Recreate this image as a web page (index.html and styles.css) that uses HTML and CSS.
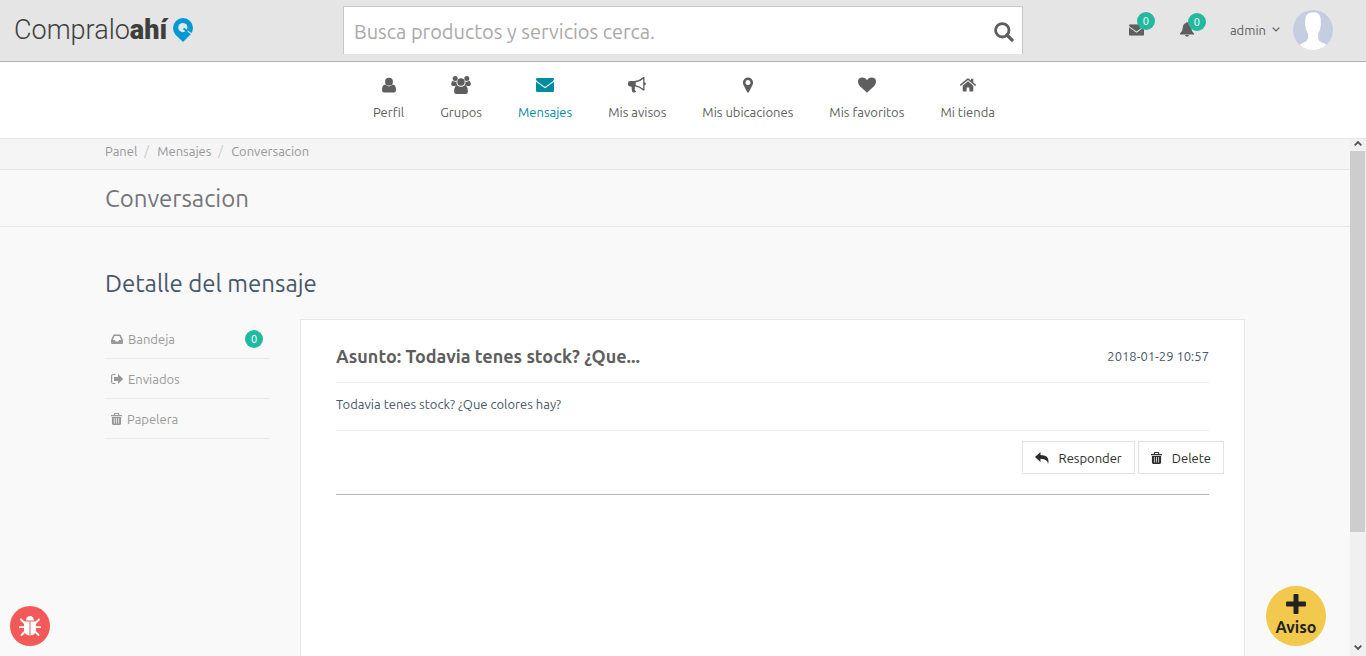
FILE: index.html
```html
<!DOCTYPE html>
<html lang="es">
<head>
<meta charset="utf-8">
<meta name="viewport" content="width=device-width, initial-scale=1">
<title>Conversacion - Compraloahí</title>
<link rel="stylesheet" href="styles.css">
</head>
<body>
<svg class="sprite" aria-hidden="true">
  <symbol id="envelope" viewBox="0 0 18 14"><path d="M1.2 0h15.6Q18 0 18 1.4 17.8 2.6 16.6 3.4L9 8.9 1.4 3.4Q.2 2.6 0 1.4 0 0 1.200 0zM0 3.800L9 10.300 18 3.800V12.700Q18 14 16.700 14H1.300Q0 14 0 12.700z"/></symbol>
  <symbol id="trash" viewBox="0 0 12 13"><path fill-rule="evenodd" d="M4 0h4q1 0 1 1v1h3v1.600H0V2h3V1q0-1 1-1zm.2 1.100V2h3.600v-.9zM1 4.200h10V11.500Q11 13 9.500 13h-7Q1 13 1 11.500zM3.200 5.500v6h.8v-6zm2.400 0v6h.8v-6zm2.400 0v6h.8v-6z"/></symbol>
</svg>

<header class="topbar">
  <a class="logo" href="#" aria-label="Compraloahí">
    <span>Compralo<b>ahí</b></span>
    <svg class="logo-pin" viewBox="0 0 20 24" aria-hidden="true">
      <path fill="#0099d3" d="M10 0a10 10 0 0 1 10 10q0 3.500-2.300 6.300L10 24 2.300 16.500Q0 13.500 0 10A10 10 0 0 1 10 0z"/>
      <circle cx="9.800" cy="9.600" r="4.600" fill="#e5e5e5"/>
      <path d="M14 12.600l5.500 4.200" stroke="#e5e5e5" stroke-width="1.200"/>
      <path d="M10.500 10.500l4 3" stroke="#0099d3" stroke-width="2"/>
    </svg>
  </a>
  <form class="search">
    <input type="text" aria-label="Buscar" placeholder="Busca productos y servicios cerca.">
    <button type="button" aria-label="Buscar">
      <svg viewBox="0 0 20 20" aria-hidden="true"><circle cx="8.300" cy="8.300" r="6.700" fill="none" stroke="currentColor" stroke-width="2.800"/><path d="M13 13l5 5" stroke="currentColor" stroke-width="3.200" stroke-linecap="round"/></svg>
    </button>
  </form>
  <div class="account">
    <a class="notice" href="#" aria-label="Mensajes sin leer"><svg class="icon-mail" viewBox="0 0 18 14"><use href="#envelope"/></svg><span class="badge">0</span></a>
    <a class="notice" href="#" aria-label="Notificaciones"><svg class="icon-bell" viewBox="0 0 14 15" aria-hidden="true"><path d="M7 0q.9 0 .9 1.100Q11 1.800 11.200 5.500q.2 4.200 2.800 6v1H0v-1q2.600-1.800 2.800-6Q3 1.800 6.100 1.100 6.100 0 7 0zM5 13h4q-.3 1.800-2 1.800T5 13z"/></svg><span class="badge">0</span></a>
    <a class="user" href="#">
      <span>admin</span>
      <svg class="chevron" viewBox="0 0 8 5" aria-hidden="true"><path d="M.7.7L4 4 7.300.7" fill="none" stroke="currentColor" stroke-width="1.200"/></svg>
      <svg class="avatar" viewBox="0 0 40 40" aria-hidden="true">
        <clipPath id="round"><circle cx="20" cy="20" r="20"/></clipPath>
        <g clip-path="url(#round)"><path fill="#c5cde1" d="M0 0h40v40H0z"/><path fill="#fff" d="M20 2.500q3.500-1 5.500 1.500 2.500 2 2.200 7.500.4 1.500 0 4.500-.7 5-2.500 7.500v5q.5 2.500 3.500 4 4.500 1 6.300 4V41H5v-4.500q2-2.500 6-4 3.500-1.500 4-4v-5q-2-2.500-2.700-7.500-.4-3-.1-5Q12 5 15.500 3.500 17.500 2 20 2.500z"/></g>
      </svg>
    </a>
  </div>
</header>

<nav class="mainnav" aria-label="Panel">
  <a href="#"><svg viewBox="0 0 18 18" aria-hidden="true"><circle cx="9" cy="5.700" r="3.900"/><path d="M5.300 8.600Q7 10.400 9 10.400t3.700-1.800Q16 9 16 14.200q0 2.300-2.100 2.300H4.100Q2 16.500 2 14.200 2 9 5.300 8.600z"/></svg>Perfil</a>
  <a href="#"><svg class="wide" viewBox="0 0 20 18" aria-hidden="true"><circle cx="4.200" cy="2.600" r="2.500"/><circle cx="15.800" cy="2.600" r="2.500"/><circle cx="10" cy="6" r="3.700"/><path d="M1.700 4.800Q4 6.500 5.500 5.400q-.3 2.300 1 3.900Q4.800 9.300 3.800 10H1.600Q.2 10 .2 8.300q0-3 1.500-3.500zM18.300 4.800Q16 6.500 14.500 5.400q.3 2.300-1 3.900 1.700 0 2.700.7h2.200q1.400 0 1.400-1.700 0-3-1.500-3.500zM6.400 9.200Q8 10.700 10 10.700t3.600-1.500q3.300.4 3.300 6.300 0 2.500-2.300 2.500H5.400q-2.300 0-2.300-2.500 0-5.900 3.300-6.300z"/></svg>Grupos</a>
  <a class="active" href="#" aria-current="page"><svg viewBox="0 -2 18 18" aria-hidden="true"><use href="#envelope" width="18" height="14"/></svg>Mensajes</a>
  <a href="#"><svg viewBox="0 0 18 18" aria-hidden="true"><path fill-rule="evenodd" d="M15.200 1h1.300v5.200q1.400.3 1.400 1.500t-1.400 1.500v5.300h-1.300Q11.500 11 7.300 10.600q-1 .6-.4 1.700.1.800-.4 1.300.5 1.200 1.700 2-.9 1.200-3 .9-1.200-.5-1.400-3l-.4-2.900H2Q0 10.600 0 8.600V6.900Q0 5 2 5h4.500Q11 4.800 15.200 1zm0 1.900Q11.600 6 7.700 6.400v2.800q4 .5 7.500 3.500z"/></svg>Mis avisos</a>
  <a href="#"><svg viewBox="0 0 18 18" aria-hidden="true"><path fill-rule="evenodd" d="M9 1.500A5.100 5.100 0 0 1 14.100 6.600Q14.100 8 13.500 9L9.900 16Q9 17.200 8.100 16L4.500 9Q3.900 8 3.900 6.600A5.100 5.100 0 0 1 9 1.500zm0 2.600a2.500 2.500 0 1 0 0 5 2.500 2.500 0 0 0 0-5z"/></svg>Mis ubicaciones</a>
  <a href="#"><svg viewBox="0 0 18 18" aria-hidden="true"><path d="M9 16.700L1.800 10Q0 8 0 5.800 0 1.600 4.600 1.600 7 1.600 9 4q2-2.400 4.400-2.400Q18 1.600 18 5.800 18 8 16.200 10z"/></svg>Mis favoritos</a>
  <a href="#"><svg viewBox="0 0 18 18" aria-hidden="true"><path d="M9 5.200l5.300 4.500v5q0 .8-.8.800H10.400v-4H7.600v4H4.500q-.8 0-.8-.8v-5z"/><path d="M8.100 2.700q.9-.7 1.800 0L12 4.500V2.800h2.300v3.600l2.900 2.400-.9 1.100L9 4.100 1.700 9.900.8 8.800z"/></svg>Mi tienda</a>
</nav>

<div class="viewport">
  <main class="page">
    <div class="crumb-band">
      <ol class="container crumbs">
        <li><a href="#">Panel</a></li>
        <li><a href="#">Mensajes</a></li>
        <li>Conversacion</li>
      </ol>
    </div>
    <div class="title-band"><h1 class="container">Conversacion</h1></div>
    <div class="container body">
      <h2>Detalle del mensaje</h2>
      <div class="columns">
        <ul class="folders">
          <li><a href="#"><svg viewBox="0 0 12 12" aria-hidden="true"><path fill-rule="evenodd" d="M3.200 1.500h5.600q.7 0 1 .7L12 7v3q0 1-1 1H1q-1 0-1-1V7l2.200-4.800q.3-.7 1-.7zm.4 1.500L1.800 7h2.100l.8 1.500h2.600L8.100 7h2.100L8.400 3z"/></svg>Bandeja<span class="badge">0</span></a></li>
          <li><a href="#"><svg viewBox="0 0 12 12" aria-hidden="true"><path d="M4.500 1.500H2Q.6 1.500.6 3v6q0 1.500 1.400 1.500h2.500" fill="none" stroke="currentColor" stroke-width="1.200"/><path d="M7 1L12.200 6 7 11V8H3V4h4z"/></svg>Enviados</a></li>
          <li><a href="#"><svg class="bin" viewBox="0 0 12 13"><use href="#trash"/></svg>Papelera</a></li>
        </ul>
        <section class="message">
          <header>
            <h3>Asunto: Todavia tenes stock? ¿Que...</h3>
            <time datetime="2018-01-29T10:57">2018-01-29 10:57</time>
          </header>
          <p>Todavia tenes stock? ¿Que colores hay?</p>
          <div class="actions">
            <button type="button"><svg viewBox="0 0 14 12" aria-hidden="true"><path d="M5.500 0v3q8 0 8 6.200 0 1.500-.5 2.800-.2-5-7.500-5.300V10L0 5z"/></svg>Responder</button>
            <button type="button"><svg class="bin" viewBox="0 0 12 13"><use href="#trash"/></svg>Delete</button>
          </div>
        </section>
      </div>
    </div>
  </main>
  <div class="scrollbar" aria-hidden="true">
    <svg viewBox="0 0 8 5"><path d="M.7 4.300L4 1 7.300 4.300" fill="none" stroke="#505050" stroke-width="1.800"/></svg>
    <div class="track"><div class="thumb"></div></div>
    <svg viewBox="0 0 8 5"><path d="M.7.7L4 4 7.300.7" fill="none" stroke="#505050" stroke-width="1.800"/></svg>
  </div>
</div>

<button class="report" type="button" aria-label="Reportar un error">
  <svg viewBox="0 0 22 22" aria-hidden="true"><path d="M7 5.500a4 4.500 0 0 1 8 0z"/><path d="M5 6.500h5.500v14Q5 20 5 14zM11.500 6.500H17V14q0 6-5.500 6.500z"/><path d="M2 4.500l4 4M20 4.500l-4 4M.7 12.200H6M16 12.200h5.300M2.500 20L6.500 16M19.500 20l-4-4" stroke="currentColor" stroke-width="1.800" stroke-linecap="round"/></svg>
</button>
<button class="publish" type="button">
  <svg viewBox="0 0 20 20" aria-hidden="true"><path d="M8.500 0h3q1 0 1 1v6.500H19q1 0 1 1v3q0 1-1 1h-6.500V19q0 1-1 1h-3q-1 0-1-1v-6.500H1q-1 0-1-1v-3q0-1 1-1h6.500V1q0-1 1-1z"/></svg>
  Aviso
</button>
</body>
</html>
```
FILE: styles.css
```css
* { box-sizing: border-box; }

body {
  margin: 0;
  height: 100vh;
  display: flex;
  flex-direction: column;
  overflow: hidden;
  background: #f9f9f9;
  color: #48576a;
  font: 13px/20px Ubuntu, "Noto Sans", sans-serif;
}

a { color: inherit; text-decoration: none; }
button, input { font: inherit; }
button { cursor: pointer; }
h1, h2, h3, p, ul, ol { margin: 0; padding: 0; }
ul, ol { list-style: none; }
svg { fill: currentColor; flex: none; }
.sprite { position: absolute; width: 0; height: 0; }

/* Top bar */
.topbar {
  display: grid;
  grid-template-columns: 1fr 2fr 1fr;
  gap: 3px;
  height: 62px;
  flex: none;
  background: #e5e5e5;
  border-bottom: 1px solid #b0b0b0;
  color: #5e5e5e;
}
.logo {
  display: flex;
  align-items: center;
  gap: 6px;
  padding: 0 0 2px 14px;
  color: #3e3e3d;
  font: 300 27px/58px Roboto, sans-serif;
}
.logo b { font-weight: 900; }
.logo-pin { width: 20px; height: 24px; }
.search {
  display: flex;
  height: 48px;
  margin-top: 6px;
  background: #fff;
  border: 1px solid #c8c8c8;
  border-bottom: 0;
}
.search input {
  flex: 1;
  min-width: 0;
  padding: 2px 10px 0;
  border: 0;
  outline: 0;
  background: none;
  color: #555;
  font-size: 20px;
}
.search input::placeholder { color: #a9a9a9; opacity: 1; }
.search button {
  display: flex;
  align-items: center;
  padding: 2px 8px 0;
  border: 0;
  background: none;
  color: #5e5e5e;
}
.search svg { width: 20px; height: 20px; }
.account {
  display: flex;
  justify-content: flex-end;
  align-items: center;
  gap: 36px;
  padding: 0 33px 2px 0;
}
.notice { position: relative; display: flex; }
.icon-mail { width: 15px; height: 12px; }
.icon-bell { width: 14px; height: 15px; }
.badge {
  width: 18px;
  height: 18px;
  border-radius: 50%;
  background: #23b99f;
  color: #fff;
  font-size: 11px;
  line-height: 18px;
  text-align: center;
}
.notice .badge { position: absolute; left: 8px; bottom: 6px; }
.user { display: flex; align-items: center; gap: 6px; }
.chevron { width: 8px; height: 5px; }
.avatar { width: 40px; height: 40px; margin-left: 7px; }

/* Section navigation */
.mainnav {
  display: flex;
  justify-content: center;
  gap: 36px;
  height: 77px;
  flex: none;
  padding: 14px 0 0 2px;
  background: #fff;
  border-bottom: 1px solid #e7e7e7;
  color: #5e5e5e;
}
.mainnav a {
  display: flex;
  flex-direction: column;
  align-items: center;
  gap: 8px;
}
.mainnav svg { width: 18px; height: 18px; }
.mainnav .wide { width: 20px; }
.mainnav .active { color: #008ba3; }

/* Scrolling area */
.viewport { display: flex; flex: 1; min-height: 0; }
.page { flex: 1; min-width: 0; overflow: hidden; display: flex; flex-direction: column; }
.container { width: 100%; max-width: 1170px; margin: 0 auto; padding: 0 15px; }
.crumb-band { background: #f5f5f5; border-bottom: 1px solid #e7e7e7; }
.crumbs { display: flex; padding-top: 2px; padding-bottom: 8px; color: #95979a; }
.crumbs li + li::before { content: "/"; padding: 0 8px 0 7px; color: #ccc; }
.title-band { border-bottom: 1px solid #e7e7e7; }
.title-band h1 { padding-top: 14px; padding-bottom: 12px; color: #757579; font-weight: 400; font-size: 24px; line-height: 30px; }
.body { flex: 1; display: flex; flex-direction: column; }
.body h2 { padding: 42px 0 20px; font-weight: 400; font-size: 24px; line-height: 30px; }
.columns { display: grid; grid-template-columns: 165px 1fr; gap: 30px; flex: 1; }

.folders { color: #999; }
.folders a {
  display: flex;
  align-items: center;
  gap: 5px;
  height: 40px;
  padding: 0 7px 0 6px;
  border-bottom: 1px solid #e7eaec;
}
.folders svg { width: 12px; height: 12px; }
.folders .bin { width: 11px; }
.folders .badge { margin-left: auto; }

.message { padding: 25px 35px; background: #fff; border: 1px solid #e7e7e7; border-bottom: 0; }
.message header {
  display: flex;
  justify-content: space-between;
  align-items: center;
  padding-bottom: 15px;
  border-bottom: 1px solid #eee;
}
.message h3 { color: #5e5e5e; font-size: 18px; line-height: 22px; }
.message p { padding: 11px 0 16px; border-bottom: 1px solid #eee; }
.actions {
  display: flex;
  justify-content: flex-end;
  gap: 3px;
  padding: 10px 0 20px;
  border-bottom: 1px solid #b4b4b4;
}
.actions button {
  display: flex;
  align-items: center;
  gap: 10px;
  height: 33px;
  padding: 0 12px;
  background: #fff;
  border: 1px solid #e2e2e2;
  color: #2d2d2d;
}
.actions button:last-child { margin-right: -15px; }
.actions svg { width: 14px; height: 12px; }
.actions .bin { width: 11px; }

.scrollbar {
  display: flex;
  flex-direction: column;
  align-items: center;
  gap: 5px;
  width: 16px;
  padding: 2px 0 6px;
  background: #f0f0f0;
}
.scrollbar svg { width: 8px; height: 5px; }
.track { flex: 1; align-self: stretch; padding-right: 1px; }
.thumb { height: 78%; background: #cdcdcd; }

/* Floating buttons */
.report, .publish {
  position: fixed;
  bottom: 10px;
  display: flex;
  flex-direction: column;
  align-items: center;
  justify-content: center;
  padding: 0;
  border: 0;
  border-radius: 50%;
}
.report { left: 10px; width: 40px; height: 40px; background: #f35958; color: #fff; }
.report svg { width: 22px; height: 22px; }
.publish { right: 40px; width: 60px; height: 60px; padding-bottom: 2px; gap: 3px; background: #f2c94c; color: #222; font-size: 16px; font-weight: 700; }
.publish svg { width: 20px; height: 20px; }
```
